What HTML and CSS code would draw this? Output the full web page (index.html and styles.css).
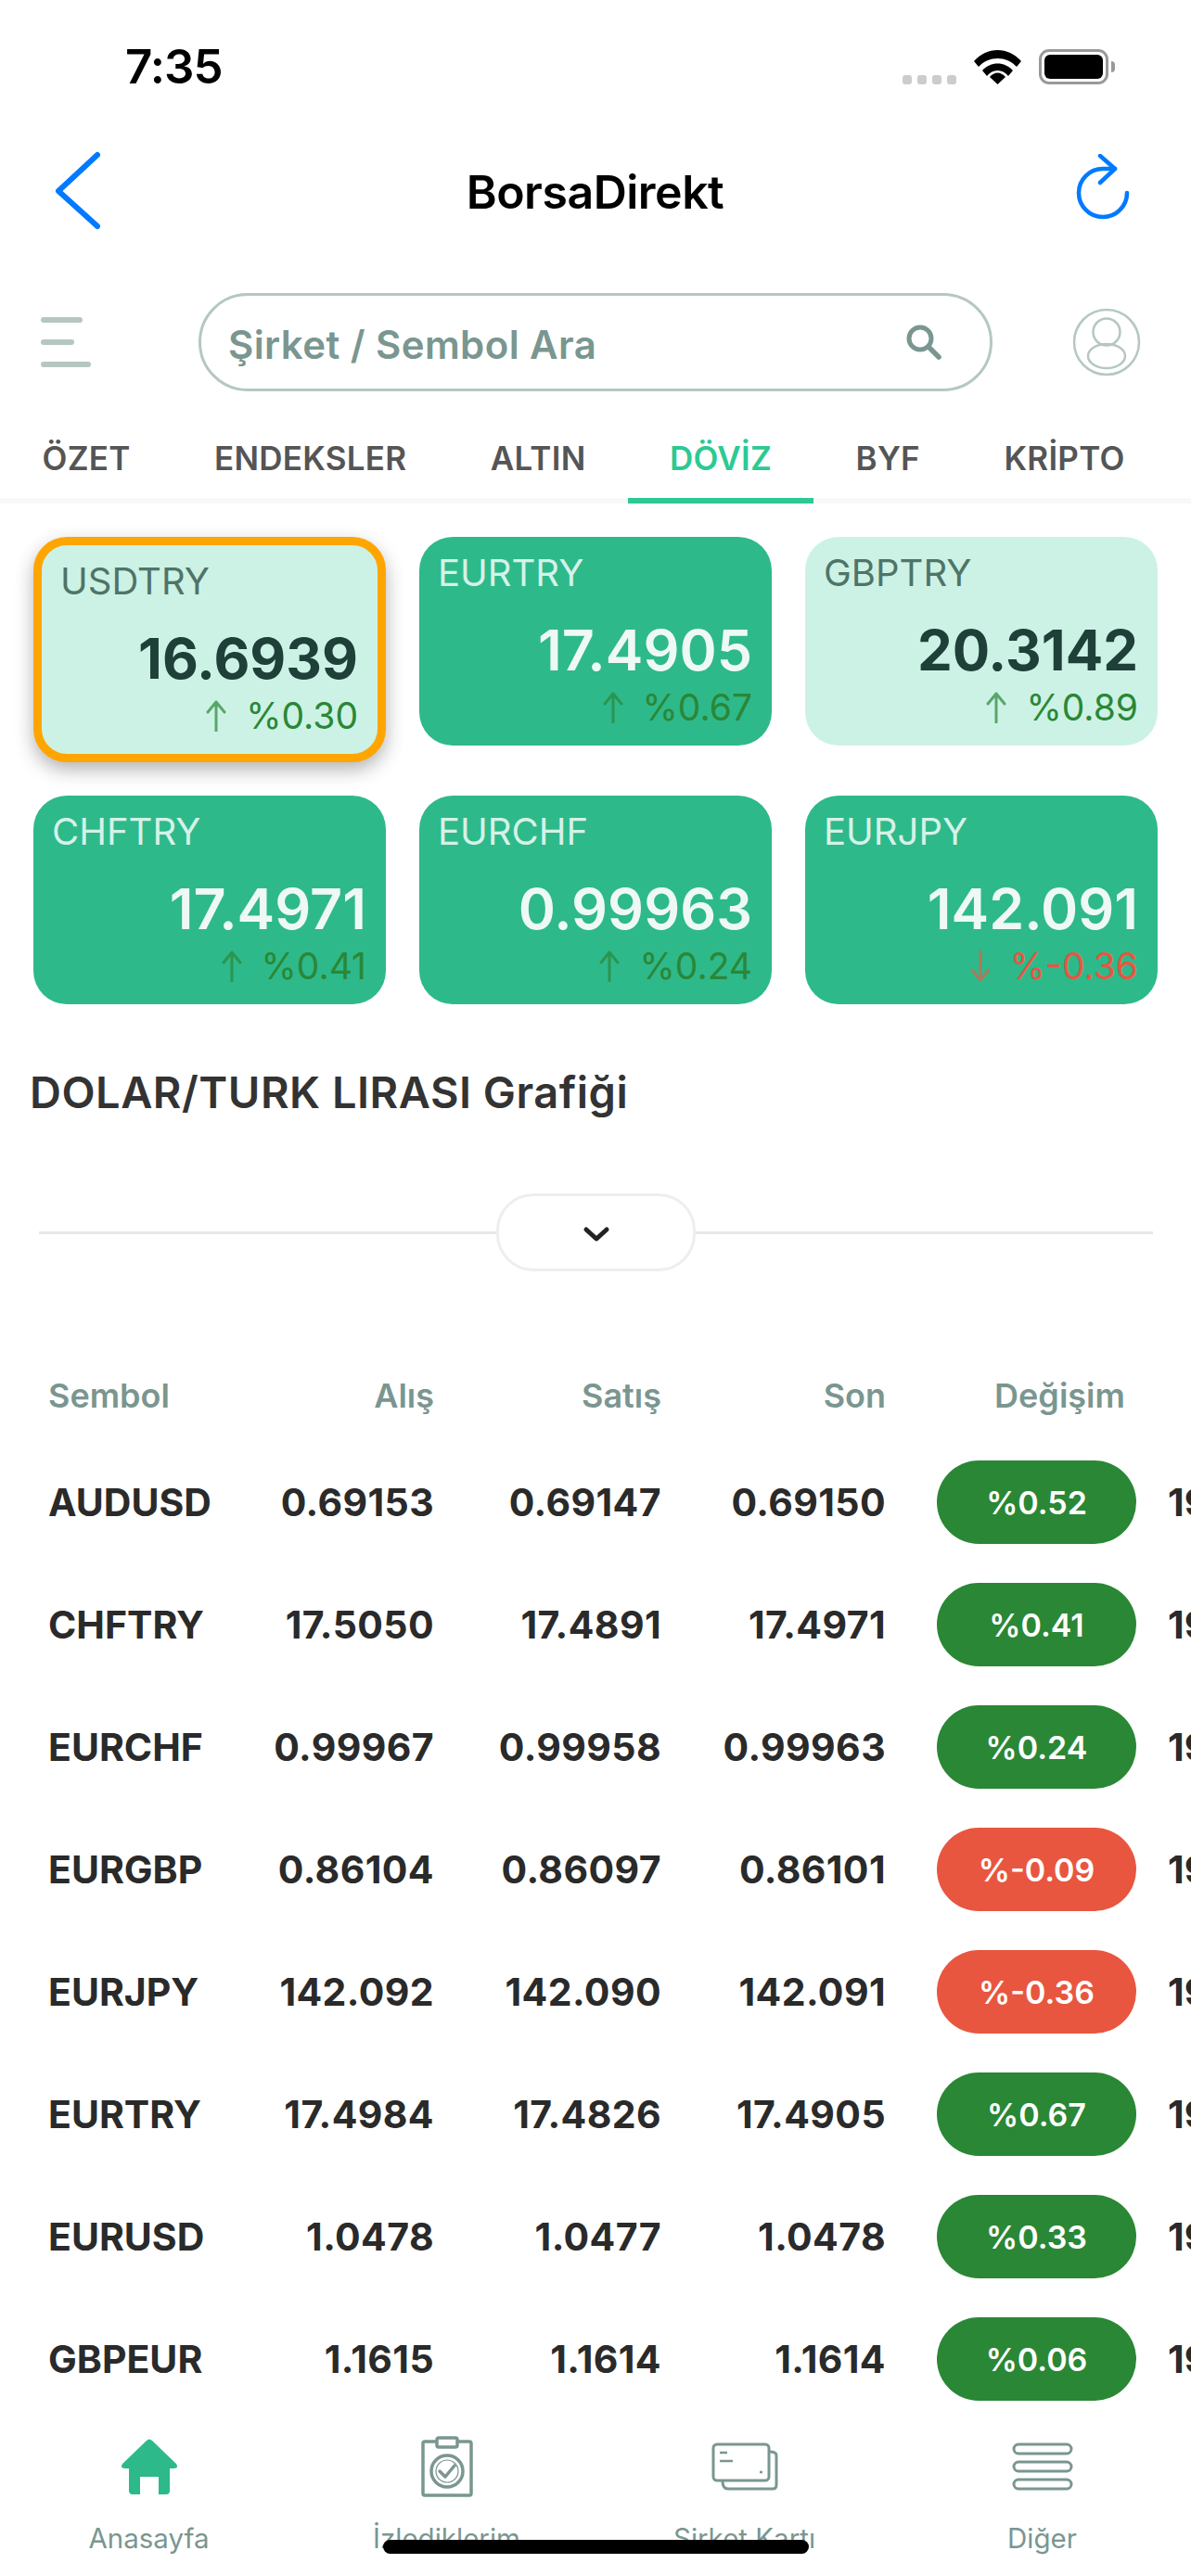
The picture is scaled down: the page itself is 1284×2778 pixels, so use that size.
FILE: index.html
```html
<!DOCTYPE html>
<html lang="tr">
<head>
<meta charset="utf-8">
<title>BorsaDirekt</title>
<link rel="stylesheet" href="styles.css">
</head>
<body>
<div class="phone">
  <header class="status">
    <span class="clock">7:35</span>
    <div class="status-icons">
      <div class="signal"><i></i><i></i><i></i><i></i></div>
      <svg class="wifi" width="51" height="38" viewBox="0 0 51 38"><path d="M0 13 C14 -3 37 -3 51 13 L46 19 C35 7 16 7 5 19Z M9 23 C18 13 33 13 42 23 L37 29 C31 21 20 21 14 29Z M17 30 C22 24 29 24 34 30 L25.5 38Z" fill="#000"/></svg>
      <div class="battery"><div class="battery-fill"></div></div>
      <div class="battery-nub"></div>
    </div>
  </header>

  <nav class="navbar">
    <svg class="back" width="56" height="92" viewBox="0 0 56 92"><path d="M49 7 L7 46 L49 84" fill="none" stroke="#007aff" stroke-width="6" stroke-linecap="round" stroke-linejoin="round"/></svg>
    <h1 class="title">BorsaDirekt</h1>
    <svg class="refresh" width="60" height="72" viewBox="0 0 60 72"><path d="M56 42 A26 26 0 1 1 30 16 L43 16" fill="none" stroke="#007aff" stroke-width="4.5" stroke-linecap="round"/><path d="M27 2 L43 16 L27 31" fill="none" stroke="#007aff" stroke-width="4.5" stroke-linecap="round" stroke-linejoin="round"/></svg>
  </nav>

  <div class="search-row">
    <div class="hamburger"><i class="h1"></i><i class="h2"></i><i class="h3"></i></div>
    <div class="search">
      <span class="placeholder">Şirket / Sembol Ara</span>
      <svg width="38" height="38" viewBox="0 0 38 38"><circle cx="15" cy="15" r="12" fill="none" stroke="#7a9690" stroke-width="5"/><path d="M24 24 L35 35" stroke="#7a9690" stroke-width="5.5" stroke-linecap="round"/></svg>
    </div>
    <svg class="avatar" width="74" height="74" viewBox="0 0 74 74" fill="none" stroke="#b5c7c3" stroke-width="2.5"><circle cx="37" cy="37" r="35"/><circle cx="37" cy="26" r="14.5"/><ellipse cx="37" cy="52" rx="20" ry="13"/></svg>
  </div>

  <div class="tabs">
    <span class="tab">ÖZET</span>
    <span class="tab">ENDEKSLER</span>
    <span class="tab">ALTIN</span>
    <span class="tab tab-active">DÖVİZ</span>
    <span class="tab">BYF</span>
    <span class="tab">KRİPTO</span>
  </div>

  <section class="cards">
    <article class="card card-light card-selected">
      <div class="card-name">USDTRY</div>
      <div class="card-value">16.6939</div>
      <div class="card-change up"><svg width="24" height="34" viewBox="0 0 24 34"><path d="M12 33 V2 M3 13 L12 2 L21 13" /></svg><span>%0.30</span></div>
    </article>
    <article class="card card-dark">
      <div class="card-name">EURTRY</div>
      <div class="card-value">17.4905</div>
      <div class="card-change up"><svg width="24" height="34" viewBox="0 0 24 34"><path d="M12 33 V2 M3 13 L12 2 L21 13" /></svg><span>%0.67</span></div>
    </article>
    <article class="card card-light">
      <div class="card-name">GBPTRY</div>
      <div class="card-value">20.3142</div>
      <div class="card-change up"><svg width="24" height="34" viewBox="0 0 24 34"><path d="M12 33 V2 M3 13 L12 2 L21 13" /></svg><span>%0.89</span></div>
    </article>
    <article class="card card-dark">
      <div class="card-name">CHFTRY</div>
      <div class="card-value">17.4971</div>
      <div class="card-change up"><svg width="24" height="34" viewBox="0 0 24 34"><path d="M12 33 V2 M3 13 L12 2 L21 13" /></svg><span>%0.41</span></div>
    </article>
    <article class="card card-dark">
      <div class="card-name">EURCHF</div>
      <div class="card-value">0.99963</div>
      <div class="card-change up"><svg width="24" height="34" viewBox="0 0 24 34"><path d="M12 33 V2 M3 13 L12 2 L21 13" /></svg><span>%0.24</span></div>
    </article>
    <article class="card card-dark">
      <div class="card-name">EURJPY</div>
      <div class="card-value">142.091</div>
      <div class="card-change down"><svg width="24" height="34" viewBox="0 0 24 34"><path d="M12 1 V32 M3 21 L12 32 L21 21" /></svg><span>%-0.36</span></div>
    </article>
  </section>

  <h2 class="chart-title">DOLAR/TURK LIRASI Grafiği</h2>

  <div class="collapse">
    <div class="collapse-line"></div>
    <div class="collapse-btn"><svg width="30" height="18" viewBox="0 0 30 18"><path d="M4 4 L15 14 L26 4" fill="none" stroke="#222" stroke-width="5" stroke-linecap="round" stroke-linejoin="round"/></svg></div>
    <div class="collapse-line"></div>
  </div>

  <main class="table">
    <div class="row row-head">
      <span class="c-sym">Sembol</span><span class="c-num">Alış</span><span class="c-num">Satış</span><span class="c-num">Son</span><span class="c-head-change">Değişim</span><span></span>
    </div>
    <div class="row"><span class="c-sym">AUDUSD</span><span class="c-num">0.69153</span><span class="c-num">0.69147</span><span class="c-num">0.69150</span><span class="pill pill-up">%0.52</span><span class="c-time">19:34</span></div>
    <div class="row"><span class="c-sym">CHFTRY</span><span class="c-num">17.5050</span><span class="c-num">17.4891</span><span class="c-num">17.4971</span><span class="pill pill-up">%0.41</span><span class="c-time">19:34</span></div>
    <div class="row"><span class="c-sym">EURCHF</span><span class="c-num">0.99967</span><span class="c-num">0.99958</span><span class="c-num">0.99963</span><span class="pill pill-up">%0.24</span><span class="c-time">19:34</span></div>
    <div class="row"><span class="c-sym">EURGBP</span><span class="c-num">0.86104</span><span class="c-num">0.86097</span><span class="c-num">0.86101</span><span class="pill pill-down">%-0.09</span><span class="c-time">19:34</span></div>
    <div class="row"><span class="c-sym">EURJPY</span><span class="c-num">142.092</span><span class="c-num">142.090</span><span class="c-num">142.091</span><span class="pill pill-down">%-0.36</span><span class="c-time">19:34</span></div>
    <div class="row"><span class="c-sym">EURTRY</span><span class="c-num">17.4984</span><span class="c-num">17.4826</span><span class="c-num">17.4905</span><span class="pill pill-up">%0.67</span><span class="c-time">19:34</span></div>
    <div class="row"><span class="c-sym">EURUSD</span><span class="c-num">1.0478</span><span class="c-num">1.0477</span><span class="c-num">1.0478</span><span class="pill pill-up">%0.33</span><span class="c-time">19:34</span></div>
    <div class="row"><span class="c-sym">GBPEUR</span><span class="c-num">1.1615</span><span class="c-num">1.1614</span><span class="c-num">1.1614</span><span class="pill pill-up">%0.06</span><span class="c-time">19:34</span></div>
  </main>

  <footer class="tabbar">
    <div class="bar-item">
      <div class="bar-icon"><svg width="62" height="62" viewBox="0 0 62 62"><path d="M28 3 Q31 0 34 3 L60 28 Q63 33 57 33 H53 V57 Q53 61 49 61 H41 V42 H21 V61 H13 Q9 61 9 57 V33 H5 Q-1 33 2 28 Z" fill="#2eb98a"/></svg></div>
      <span class="bar-label">Anasayfa</span>
    </div>
    <div class="bar-item">
      <div class="bar-icon"><svg width="56" height="66" viewBox="0 0 56 66" fill="none" stroke="#7a9690" stroke-width="3.5"><path d="M16 6 H4 Q2 6 2 8 V62 Q2 64 4 64 H52 Q54 64 54 62 V8 Q54 6 52 6 H40"/><rect x="17" y="2" width="22" height="10" rx="2"/><circle cx="28" cy="38" r="17"/><circle cx="28" cy="38" r="12" stroke-width="1.2"/><path d="M20 38 L26 44 L36 32" stroke-linecap="round" stroke-linejoin="round"/></svg></div>
      <span class="bar-label">İzlediklerim</span>
    </div>
    <div class="bar-item">
      <div class="bar-icon"><svg width="72" height="52" viewBox="0 0 72 52" fill="none" stroke="#7a9690" stroke-width="3"><rect x="2" y="2" width="60" height="39" rx="4"/><path d="M12 42 Q12 50 18 50 H66 Q70 50 70 46 V14 Q70 10 63 10"/><path d="M9 11 H17 M9 20 H23 M52 32 H55" stroke-width="2.5"/></svg></div>
      <span class="bar-label">Şirket Kartı</span>
    </div>
    <div class="bar-item">
      <div class="bar-icon"><svg width="66" height="52" viewBox="0 0 66 52" fill="none" stroke="#7a9690" stroke-width="3"><rect x="2" y="2" width="62" height="10" rx="5"/><rect x="2" y="21" width="62" height="10" rx="5"/><rect x="2" y="40" width="62" height="10" rx="5"/></svg></div>
      <span class="bar-label">Diğer</span>
    </div>
  </footer>
  <div class="home-indicator"></div>
</div>
</body>
</html>
```

FILE: styles.css
```css
* { box-sizing: border-box; }
html, body { margin: 0; padding: 0; background: #fff; }
body { font-family: Inter, "Noto Sans", sans-serif; }
.phone { position: relative; width: 1284px; height: 2778px; overflow: hidden; background: #fff; display: flex; flex-direction: column; }

.status { height: 130px; flex: none; display: flex; align-items: flex-start; justify-content: space-between; padding: 42px 82px 0 135px; }
.clock { font-size: 51px; line-height: 60px; font-weight: 600; color: #000; letter-spacing: -1px; }
.status-icons { display: flex; align-items: flex-start; padding-top: 11px; }
.signal { display: flex; gap: 6px; margin-top: 28px; margin-right: 19px; }
.signal i { width: 10px; height: 10px; border-radius: 3px; background: #ccc; }
.wifi { margin-right: 19px; }
.battery { width: 75px; height: 38px; border: 3.5px solid #999; border-radius: 11px; padding: 3px; }
.battery-fill { width: 100%; height: 100%; background: #000; border-radius: 6px; }
.battery-nub { width: 4px; height: 12px; margin: 13px 0 0 3px; background: #999; border-radius: 0 4px 4px 0; }

.navbar { height: 152px; flex: none; display: grid; grid-template-columns: 1fr auto 1fr; align-items: center; padding: 0 65px 0 56px; }
.title { margin: 2px 0 0; padding-left: 8px; font-size: 50px; font-weight: 600; color: #000; letter-spacing: -0.5px; }
.refresh { justify-self: end; margin-top: -8px; }

.search-row { height: 106px; margin-top: 34px; flex: none; display: flex; align-items: center; }
.hamburger { width: 171px; padding-left: 44px; display: flex; flex-direction: column; gap: 18px; }
.hamburger i { display: block; height: 6px; border-radius: 3px; background: #b5c7c3; filter: blur(0.7px); }
.h1 { width: 45px; } .h2 { width: 36px; } .h3 { width: 54px; }
.search { width: 856px; margin-left: 43px; height: 106px; border: 3px solid #b5c7c3; border-radius: 53px; display: flex; align-items: center; justify-content: space-between; padding: 0 52px 0 29px; }
.placeholder { font-size: 42px; line-height: 50px; margin-top: 6px; font-weight: 600; color: #7a9690; letter-spacing: 0.4px; white-space: nowrap; }
.avatar { margin-left: 86px; }

.tabs { height: 121px; flex: none; display: flex; align-items: stretch; border-bottom: 6px solid #f8f8f8; }
.tab { padding: 28px 45px 0 45.5px; font-size: 35px; font-weight: 600; color: #555; letter-spacing: 0.25px; display: flex; align-items: center; height: 121px; border-bottom: 6px solid transparent; white-space: nowrap; }
.tab-active { color: #2dc993; border-bottom-color: #2dc993; }

.cards { flex: none; margin-top: 36px; padding: 0 36px; display: grid; grid-template-columns: repeat(3, 380px); column-gap: 36px; row-gap: 36px; align-items: start; }
.card { height: 225px; border-radius: 36px; padding: 15px 21px 0 20px; }
.card-light { background: #ccf2e5; color: #4f7468; }
.card-dark { background: #2eb98a; color: #d5f2e8; }
.card-selected { height: 243px; border: 9px solid #ffa500; box-shadow: 0 8px 20px rgba(0,0,0,0.3); }
.card-name { font-size: 40px; line-height: 48px; font-weight: 400; }
.card-value { margin-top: 24px; text-align: right; font-size: 61px; line-height: 70px; font-weight: 600; white-space: nowrap; }
.card-light .card-value { color: #1f4038; font-size: 60px; font-weight: 700; }
.card-dark .card-value { color: #eef9f5; }
.card-change { margin-top: 4px; display: flex; justify-content: flex-end; align-items: center; gap: 20px; font-size: 39px; line-height: 46px; font-weight: 400; }
.card-change svg { fill: none; stroke-width: 3; stroke-linecap: round; stroke-linejoin: round; opacity: 0.7; }
.up { color: #2a8735; } .up svg { stroke: #2a8735; }
.down { color: #e85640; } .down svg { stroke: #d8634e; }

.chart-title { margin: 67px 0 0 32px; font-size: 47px; line-height: 56px; font-weight: 600; color: #333; letter-spacing: 0.5px; flex: none; }
.collapse { flex: none; margin: 81px 41px 0 42px; display: flex; align-items: center; height: 84px; }
.collapse-line { flex: 1; height: 3px; background: #e8e8e8; }
.collapse-btn { width: 215px; height: 84px; border: 3px solid #eee; border-radius: 40px; display: flex; align-items: center; justify-content: center; padding-top: 4px; }

.table { flex: 1; min-height: 0; overflow: hidden; margin-top: 109px; }
.row { width: 1500px; height: 132px; display: grid; grid-template-columns: 188px 228px 245px 242px 55px 215px 34px 200px; padding-left: 52px; align-items: center; font-size: 41px; font-weight: 650; color: #2a2a2a; }
.row > :nth-child(5) { grid-column: 6; }
.row > :nth-child(6) { grid-column: 8; }
.row-head { height: 50px; margin-bottom: 24px; font-size: 36px; font-weight: 600; color: #7a9690; }
.c-num { text-align: right; letter-spacing: 0.4px; }
.row-head .c-num { letter-spacing: 0; }
.c-head-change { text-align: center; padding-left: 50px; white-space: nowrap; }
.pill { height: 90px; border-radius: 45px; display: flex; align-items: center; justify-content: center; color: #fff; font-size: 34px; font-weight: 600; }
.pill-up { background: #2a8735; }
.pill-down { background: #e85640; }

.tabbar { flex: none; height: 178px; background: #fff; display: grid; grid-template-columns: repeat(4, 321px); }
.bar-item { display: flex; flex-direction: column; align-items: center; }
.bar-icon { height: 66px; margin-top: 27px; display: flex; align-items: center; justify-content: center; }
.bar-label { margin-top: 27px; font-size: 29.5px; line-height: 34px; font-weight: 400; color: #7a9690; }

.home-indicator { position: absolute; left: 413px; top: 2739px; width: 459px; height: 15px; border-radius: 8px; background: #000; }
```
